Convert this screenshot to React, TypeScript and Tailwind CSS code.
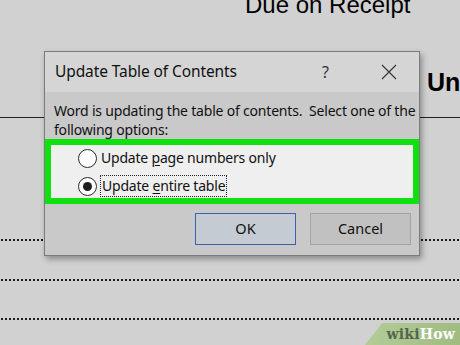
import React from 'react';

const dialogFont = { fontFamily: '"Noto Sans", "Open Sans", sans-serif' };

const DottedLine: React.FC<{ className?: string }> = ({ className }) => (
  <div
    className={`h-[2px] w-full bg-[radial-gradient(circle,#1a1a1a_45%,transparent_55%)] bg-[length:4px_2px] ${className ?? ''}`}
  />
);

const Radio: React.FC<{ checked?: boolean }> = ({ checked }) => (
  <span className="flex h-[19px] w-[19px] items-center justify-center rounded-full border-[1.5px] border-[#2a2a2a] bg-white">
    {checked && <span className="h-[9px] w-[9px] rounded-full bg-[#1e1e1e]" />}
  </span>
);

const UpdateTocDialog: React.FC = () => {
  return (
    <div
      className="absolute left-[44px] top-[51px] flex w-[376px] flex-col border border-[#7b7b7b] bg-[#c9c9c9] text-[#111] shadow-[2px_3px_6px_rgba(0,0,0,0.35)]"
      style={dialogFont}
    >
      {/* title bar */}
      <div className="flex h-[40px] items-center bg-[#d5d5d5] pl-[10px] pr-[22px]">
        <span className="text-[15.5px] leading-none tracking-[-0.1px]">Update Table of Contents</span>
        <span className="ml-auto mr-[52px] text-[16px] leading-none text-[#333]">?</span>
        <svg width="16" height="16" viewBox="0 0 16 16" className="text-[#333]">
          <path d="M1 1 L15 15 M15 1 L1 15" stroke="currentColor" strokeWidth="1.1" fill="none" />
        </svg>
      </div>

      {/* message */}
      <p className="pl-[9px] pt-[10px] text-[14px] leading-[18.5px] tracking-[-0.2px]">
        Word is updating the table of contents.&nbsp; Select one of the following options:
      </p>

      {/* highlighted options */}
      <div className="flex flex-col gap-[4px] border-[6px] border-[#0fe00f] bg-[#efefef] pl-[27px] pt-[1px] text-[14px] tracking-[-0.2px]">
        <label className="flex h-[24px] items-center gap-[3px]">
          <Radio />
          <span className="px-[1px] leading-[20px]">
            Update <span className="underline underline-offset-2">p</span>age numbers only
          </span>
        </label>
        <label className="flex h-[24px] items-center gap-[3px]">
          <Radio checked />
          <span className="border border-dotted border-[#222] px-[1px] leading-[20px]">
            Update <span className="underline underline-offset-2">e</span>ntire table
          </span>
        </label>
      </div>

      {/* buttons */}
      <div className="flex justify-end gap-[14px] pb-[10px] pr-[8px] pt-[9px] text-[14.5px]">
        <button className="h-[32px] w-[101px] border border-[#3d61b0] bg-[#c4cbd3] shadow-[inset_0_0_0_1px_#c4cbd3]">
          OK
        </button>
        <button className="h-[32px] w-[101px] border border-[#a3a3a3] bg-[#c1c1c1]">Cancel</button>
      </div>
    </div>
  );
};

const WikiHowMark: React.FC = () => (
  <div className="absolute bottom-0 right-0 flex h-[22px] w-[95px] items-center justify-end bg-[linear-gradient(90deg,#b3cc98,#9fbc82)] pr-[5px] [clip-path:polygon(18%_0,100%_0,100%_100%,0_100%)]">
    <span className="text-[14px] font-bold leading-none tracking-[0.2px]" style={{ fontFamily: '"DejaVu Serif", serif' }}>
      <span className="text-[#56654b]">wiki</span>
      <span className="text-white">How</span>
    </span>
  </div>
);

export default function App() {
  return (
    <div
      className="relative h-[345px] w-[460px] overflow-hidden bg-[#d1d1d1] text-black"
      style={{ fontFamily: '"Liberation Sans", Arial, sans-serif' }}
    >
      {/* document page behind the dialog */}
      <div className="flex flex-col">
        <div className="mt-[-7px] pl-[245px] text-[24px] leading-none">Due on Receipt</div>
        <div className="mt-[53px] pl-[427px] text-[25px] font-bold leading-none">Un</div>
        <div className="mt-[22px] h-px w-full bg-[#222]" />
        <DottedLine className="mt-[121px]" />
        <DottedLine className="mt-[38px]" />
        <DottedLine className="mt-[37px]" />
      </div>

      <UpdateTocDialog />
      <WikiHowMark />
    </div>
  );
}
